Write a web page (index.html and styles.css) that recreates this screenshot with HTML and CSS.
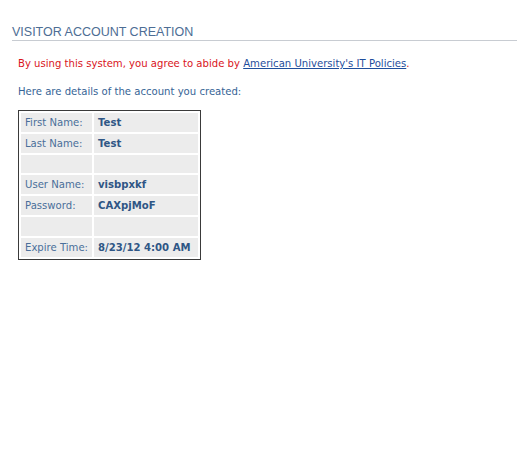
FILE: index.html
```html
<!DOCTYPE html>
<html>
<head>
<meta charset="utf-8">
<title>Visitor Account Creation</title>
<link rel="stylesheet" href="styles.css">
</head>
<body>
<div class="page">
  <h1 class="page-title">VISITOR ACCOUNT CREATION</h1>
  <div class="content">
    <p class="notice">By using this system, you agree to abide by <a href="#">American University's IT Policies</a>.</p>
    <p class="intro">Here are details of the account you created:</p>
    <table class="account">
      <tr><td class="label">First Name:</td><td class="value">Test</td></tr>
      <tr><td class="label">Last Name:</td><td class="value">Test</td></tr>
      <tr><td class="label">&nbsp;</td><td class="value">&nbsp;</td></tr>
      <tr><td class="label">User Name:</td><td class="value">visbpxkf</td></tr>
      <tr><td class="label">Password:</td><td class="value">CAXpjMoF</td></tr>
      <tr><td class="label">&nbsp;</td><td class="value">&nbsp;</td></tr>
      <tr><td class="label">Expire Time:</td><td class="value">8/23/12 4:00 AM</td></tr>
    </table>
  </div>
</div>
</body>
</html>
```
FILE: styles.css
```css
html, body {
  margin: 0;
  padding: 0;
  background: #fff;
}

.page {
  padding: 26px 7px 0 12px;
}

.page-title {
  margin: 0;
  padding-bottom: 2px;
  border-bottom: 1px solid #c8ccd2;
  font-family: "Liberation Sans", Arial, sans-serif;
  font-size: 12.5px;
  font-weight: normal;
  line-height: 12px;
  color: #4d6d94;
}

.content {
  padding: 0 0 0 6px;
  font-family: "DejaVu Sans", Verdana, sans-serif;
  font-size: 10.1px;
}

.notice {
  margin: 16px 0 0;
  line-height: 13px;
  color: #d9141c;
}

.notice a {
  color: #1f4e9c;
  text-decoration: underline;
}

.intro {
  margin: 15px 0 0;
  line-height: 13px;
  color: #366496;
}

.account {
  margin-top: 12px;
  border: 1px solid #3a3a3a;
  border-collapse: separate;
  border-spacing: 2px;
}

.account td {
  background: #ececec;
  height: 18.8px;
  padding: 0 4px;
  line-height: 13px;
  white-space: nowrap;
}

.account .label {
  width: 61px;
  color: #4a6f9a;
}

.account .value {
  width: 96px;
  font-weight: bold;
  color: #2f5685;
}
```
